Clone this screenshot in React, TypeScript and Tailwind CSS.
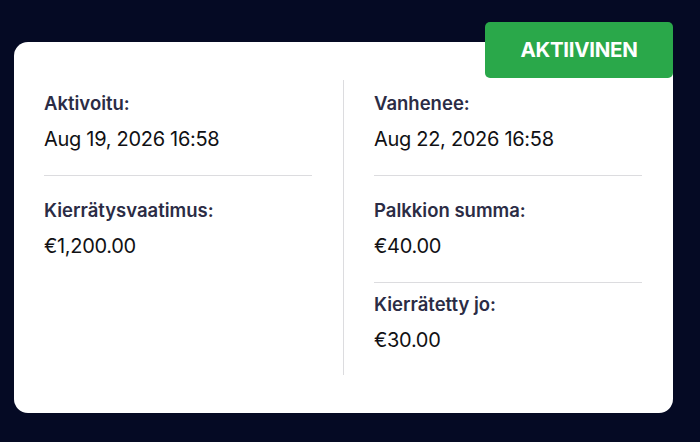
import React from "react";

interface Field {
  label: string;
  value: string;
}

const left: Field[] = [
  { label: "Aktivoitu:", value: "Aug 19, 2026 16:58" },
  { label: "Kierrätysvaatimus:", value: "€1,200.00" },
];

const right: Field[] = [
  { label: "Vanhenee:", value: "Aug 22, 2026 16:58" },
  { label: "Palkkion summa:", value: "€40.00" },
  { label: "Kierrätetty jo:", value: "€30.00" },
];

// padding per row, the first row sits tight to the top of the column
const rowPad = ["pt-[11px] pb-[23px]", "pt-[22px] pb-[23px]", "pt-[9px] pb-[22px]"];

function Column({ fields }: { fields: Field[] }) {
  return (
    <div className="flex flex-col w-[268px]">
      {fields.map((f, i) => (
        <div
          key={f.label}
          className={`${rowPad[i]} ${i < fields.length - 1 ? "border-b border-[#dcdcdf]" : ""}`}
        >
          <div className="text-[18.5px] leading-[24px] font-semibold text-[#2b2c45]">
            {f.label}
          </div>
          <div className="mt-[11px] text-[20px] leading-[26px] tracking-[-0.3px] text-[#111114]">
            {f.value}
          </div>
        </div>
      ))}
    </div>
  );
}

export default function App() {
  return (
    <div
      className="w-[700px] h-[442px] bg-[#050a24] pt-[42px] pl-[14px]"
      style={{ fontFamily: "Inter, 'Noto Sans', sans-serif" }}
    >
      <div className="relative w-[659px] h-[371px] bg-white rounded-[14px] px-[30px] py-[38px]">
        <div className="absolute right-0 top-[-20px] w-[188px] h-[56px] rounded-[5px] bg-[#2aa84a] flex items-center justify-center text-white text-[20.5px] font-bold tracking-[-0.3px]">
          AKTIIVINEN
        </div>
        <div className="flex h-full">
          <Column fields={left} />
          <div className="w-px bg-[#dcdcdf] ml-[31px] mr-[30px]" />
          <Column fields={right} />
        </div>
      </div>
    </div>
  );
}
